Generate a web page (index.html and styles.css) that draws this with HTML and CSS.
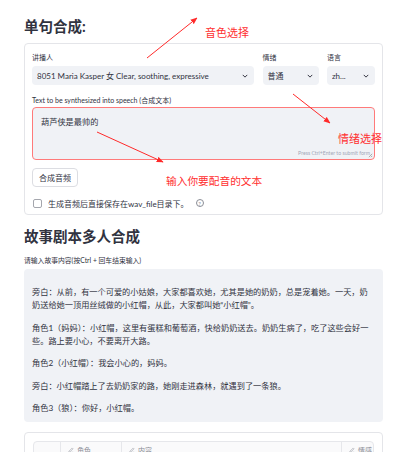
FILE: index.html
```html
<!DOCTYPE html>
<html lang="zh">
<head>
<meta charset="utf-8">
<link rel="stylesheet" href="styles.css">
</head>
<body>
<div class="page">
  <h2 class="title t1">单句合成:</h2>
  <div class="card">
    <div class="row">
      <div class="field">
        <div class="label">讲播人</div>
        <div class="select"><span class="val">8051 Maria Kasper 女 Clear, soothing, expressive</span><svg class="chev" viewBox="0 0 8 5"><polyline points="1,1 4,4 7,1"/></svg></div>
      </div>
      <div class="field">
        <div class="label">情绪</div>
        <div class="select"><span class="val">普通</span><svg class="chev" viewBox="0 0 8 5"><polyline points="1,1 4,4 7,1"/></svg></div>
      </div>
      <div class="field">
        <div class="label">语言</div>
        <div class="select"><span class="val">zh...</span><svg class="chev" viewBox="0 0 8 5"><polyline points="1,1 4,4 7,1"/></svg></div>
      </div>
    </div>
    <div class="label l2">Text to be synthesized into speech (合成文本)</div>
    <div class="textarea">
      <span>葫芦侠是最帅的</span>
      <span class="hint">Press Ctrl+Enter to submit form</span>
      <svg class="grip" viewBox="0 0 6 6"><line x1="1" y1="5" x2="5" y2="1"/><line x1="3.5" y1="5" x2="5" y2="3.5"/></svg>
    </div>
    <button class="btn">合成音频</button>
    <div class="check">
      <span class="box"></span>
      <span class="clabel">生成音频后直接保存在wav_file目录下。</span>
      <span class="help">?</span>
    </div>
  </div>

  <h2 class="title t2">故事剧本多人合成</h2>
  <div class="label l3">请输入故事内容(按Ctrl + 回车结束输入)</div>
  <div class="story">
    <p>旁白：从前，有一个可爱的小姑娘，大家都喜欢她，尤其是她的奶奶，总是宠着她。一天，奶<br>奶送给她一顶用丝绒做的小红帽，从此，大家都叫她“小红帽”。</p>
    <p>角色1（妈妈）：小红帽，这里有蛋糕和葡萄酒，快给奶奶送去。奶奶生病了，吃了这些会好一<br>些。路上要小心，不要离开大路。</p>
    <p>角色2（小红帽）：我会小心的，妈妈。</p>
    <p>旁白：小红帽踏上了去奶奶家的路，她刚走进森林，就遇到了一条狼。</p>
    <p>角色3（狼）：你好，小红帽。</p>
  </div>

  <div class="tcard">
    <div class="table">
      <div class="th idx"></div>
      <div class="th"><svg class="pen" viewBox="0 0 8 8"><path d="M1 7 L1.3 5.6 L5.6 1.3 L6.7 2.4 L2.4 6.7 Z"/><line x1="4.5" y1="7" x2="7" y2="7"/></svg>角色</div>
      <div class="th"><svg class="pen" viewBox="0 0 8 8"><path d="M1 7 L1.3 5.6 L5.6 1.3 L6.7 2.4 L2.4 6.7 Z"/><line x1="4.5" y1="7" x2="7" y2="7"/></svg>内容</div>
      <div class="th"><svg class="pen" viewBox="0 0 8 8"><path d="M1 7 L1.3 5.6 L5.6 1.3 L6.7 2.4 L2.4 6.7 Z"/><line x1="4.5" y1="7" x2="7" y2="7"/></svg>情感</div>
    </div>
  </div>
</div>

<div class="note n1">音色选择</div>
<div class="note n2">情绪选择</div>
<div class="note n3">输入你要配音的文本</div>
<svg class="arrows" viewBox="0 0 420 452">
  <defs>
    <marker id="ah" viewBox="0 0 10 10" refX="9" refY="5" markerWidth="7" markerHeight="7" orient="auto" markerUnits="userSpaceOnUse">
      <path d="M0 1 L10 5 L0 9 Z" fill="#ff2a2a"/>
    </marker>
  </defs>
  <line x1="147" y1="58" x2="197" y2="18" marker-end="url(#ah)"/>
  <line x1="293" y1="94" x2="330" y2="123" marker-end="url(#ah)"/>
  <line x1="97" y1="132" x2="163" y2="162" marker-end="url(#ah)"/>
</svg>
</body>
</html>
```

FILE: styles.css
```css
* { box-sizing: border-box; }
html, body { margin: 0; padding: 0; background: #fff; }
body {
  width: 420px;
  height: 452px;
  overflow: hidden;
  position: relative;
  font-family: "Lato", "Noto Sans CJK SC", sans-serif;
  color: #31333f;
  font-size: 8.2px;
}
.page {
  padding: 18px 37px 0 24px;
}
.title {
  margin: 0;
  font-size: 14.5px;
  line-height: 18px;
  font-weight: 700;
  color: #31333f;
}
.card {
  margin-top: 7px;
  border: 1px solid #e4e5e9;
  border-radius: 4px;
  padding: 8px 7px 6px 7px;
}
.row {
  display: grid;
  grid-template-columns: 1fr 56px 48px;
  column-gap: 8.5px;
}
.label {
  font-size: 7px;
  line-height: 10px;
  color: #31333f;
  white-space: nowrap;
}
.field .label { margin-bottom: 4px; }
.select {
  height: 19px;
  background: #f0f2f6;
  border-radius: 4px;
  display: flex;
  align-items: center;
  justify-content: space-between;
  padding: 0 6px 0 5px;
  font-size: 8px;
}
.val { white-space: nowrap; overflow: hidden; }
.chev {
  width: 6px;
  height: 4px;
  fill: none;
  stroke: #31333f;
  stroke-width: 1.3;
  flex: none;
}
.l2 { margin-top: 10px; }
.textarea {
  position: relative;
  margin-top: 2px;
  height: 53px;
  border: 1px solid #ff7a7a;
  border-radius: 4px;
  background: #f0f2f6;
  padding: 8px 8px;
  font-size: 8.2px;
  line-height: 13px;
}
.hint {
  position: absolute;
  right: 4px;
  bottom: 2px;
  font-size: 5.2px;
  line-height: 7px;
  color: #a3a8b8;
  white-space: nowrap;
}
.grip {
  position: absolute;
  right: 1px;
  bottom: 1px;
  width: 5px;
  height: 5px;
  stroke: #888;
  stroke-width: 0.8;
}
.btn {
  display: block;
  margin-top: 8px;
  height: 19px;
  width: 46px;
  padding: 0;
  background: #fff;
  border: 1px solid #dcdde2;
  border-radius: 4px;
  font-family: "Lato", "Noto Sans CJK SC", sans-serif;
  font-size: 8px;
  color: #31333f;
}
.check {
  margin-top: 11px;
  display: flex;
  align-items: center;
  height: 10px;
  font-size: 8px;
}
.box {
  width: 9px;
  height: 9px;
  border: 1px solid #a4a6ad;
  border-radius: 2px;
  background: #fff;
  margin: 0 6px 0 1px;
}
.clabel { white-space: nowrap; }
.help {
  margin-left: 7px;
  width: 8px;
  height: 8px;
  border: 0.8px solid #8a8d96;
  border-radius: 50%;
  font-size: 6px;
  line-height: 7px;
  text-align: center;
  color: #8a8d96;
}
.t2 { margin-top: 13px; }
.l3 { margin-top: 9px; font-size: 6.8px; }
.story {
  margin-top: 4px;
  height: 153px;
  background: #f0f2f6;
  border-radius: 4px;
  padding: 17px 8px 0 8px;
  overflow: hidden;
  font-size: 8.2px;
  line-height: 13px;
}
.story p {
  margin: 0 0 9.5px 0;
  white-space: nowrap;
}
.tcard {
  margin-top: 10px;
  height: 40px;
  border: 1px solid #e4e5e9;
  border-radius: 4px;
  padding: 8px 8px 0 8px;
}
.table {
  display: grid;
  grid-template-columns: 26px 61px 1fr 32px;
  border: 1px solid #e6e7eb;
  border-radius: 4px;
  background: #fafafb;
  height: 30px;
}
.th {
  display: flex;
  align-items: center;
  height: 16px;
  padding-left: 7px;
  border-left: 1px solid #e6e7eb;
  font-size: 7px;
  color: #8a8d96;
  white-space: nowrap;
}
.th.idx { border-left: none; }
.pen {
  width: 6px;
  height: 6px;
  margin-right: 3px;
  fill: none;
  stroke: #a0a3ab;
  stroke-width: 0.8;
}
.note {
  position: absolute;
  color: #ff3030;
  font-size: 11px;
  line-height: 13px;
  white-space: nowrap;
}
.n1 { left: 205px; top: 26px; }
.n2 { left: 338px; top: 132px; }
.n3 { left: 166px; top: 174px; font-size: 10.7px; }
.arrows {
  position: absolute;
  left: 0;
  top: 0;
  width: 420px;
  height: 452px;
  pointer-events: none;
}
.arrows line {
  stroke: #ff2a2a;
  stroke-width: 1;
}
```
